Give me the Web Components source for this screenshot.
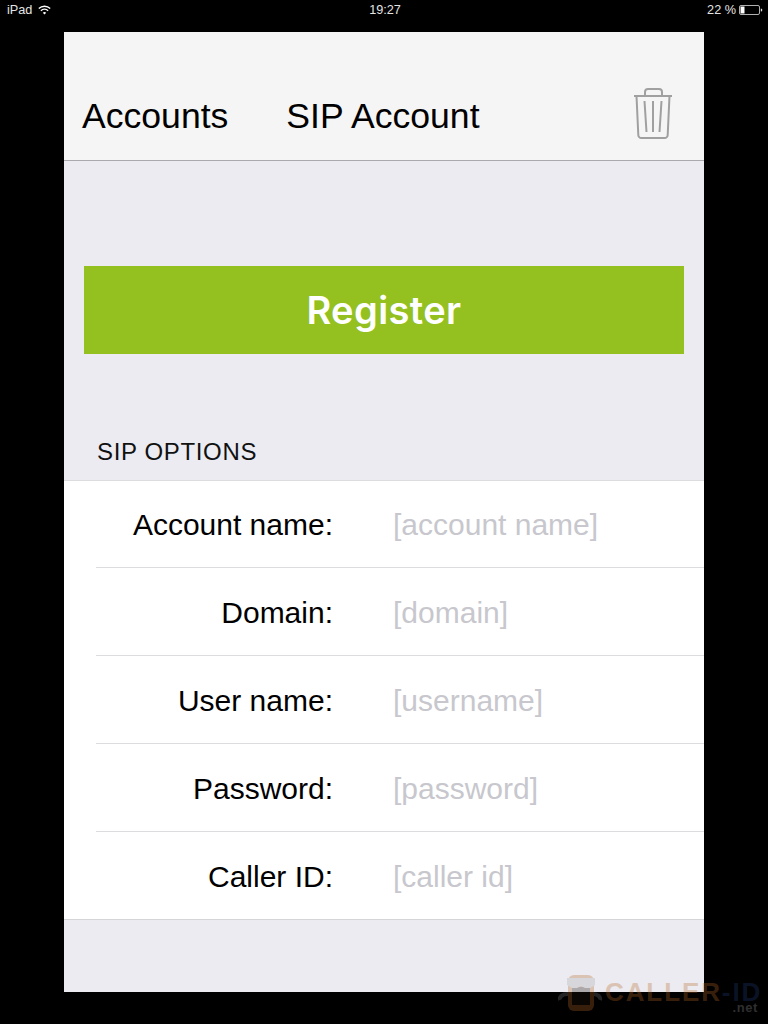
<!DOCTYPE html>
<html>
<head>
<meta charset="utf-8">
<title>SIP Account</title>
<style>
  html, body { margin: 0; height: 100%; background: #000; }
  body { font-family: "Liberation Sans", Arial, sans-serif; overflow: hidden; }
</style>
</head>
<body>
<ipad-screen>
  <status-bar slot="status"></status-bar>
  <nav-bar slot="nav" back="Accounts" heading="SIP Account"></nav-bar>
  <register-button>Register</register-button>
  <form-section heading="SIP OPTIONS">
    <form-row label="Account name:" placeholder="[account name]"></form-row>
    <form-row label="Domain:" placeholder="[domain]"></form-row>
    <form-row label="User name:" placeholder="[username]"></form-row>
    <form-row label="Password:" placeholder="[password]"></form-row>
    <form-row label="Caller ID:" placeholder="[caller id]"></form-row>
  </form-section>
</ipad-screen>
<caller-mark></caller-mark>

<script>
class IpadScreen extends HTMLElement {
  connectedCallback() {
    if (this.shadowRoot) return;
    this.attachShadow({ mode: 'open' });
    this.shadowRoot.innerHTML = `
      <style>
        :host { display: block; width: 768px; height: 1024px; }
        .app {
          width: 640px;
          height: 960px;
          margin: 0 auto;
          background: #ebebf1;
          display: flex;
          flex-direction: column;
        }
        .body { padding-top: 105px; }
      </style>
      <slot name="status"></slot>
      <div class="app">
        <slot name="nav"></slot>
        <div class="body"><slot></slot></div>
      </div>
    `;
  }
}

class StatusBar extends HTMLElement {
  connectedCallback() {
    if (this.shadowRoot) return;
    this.attachShadow({ mode: 'open' });
    this.shadowRoot.innerHTML = `
      <style>
        :host { display: block; height: 32px; color: #e4e4e4; font-size: 12.7px; }
        .bar {
          height: 20px;
          padding: 0 5px 0 7px;
          display: grid;
          grid-template-columns: 1fr auto 1fr;
          align-items: center;
        }
        .left { display: flex; align-items: center; gap: 6px; }
        .right { display: flex; align-items: center; justify-content: flex-end; gap: 3px; }
        svg { display: block; }
      </style>
      <div class="bar">
        <div class="left">
          <span>iPad</span>
          <svg width="13" height="10" viewBox="0 0 13 10" fill="none" stroke="#fff" stroke-width="1.4">
            <path d="M.8 3.6a8.2 8.2 0 0 1 11.4 0"/>
            <path d="M2.900 5.700a5.200 5.200 0 0 1 7.200 0"/>
            <path d="M6.500 9.600 4.800 7.700a2.500 2.500 0 0 1 3.400 0z" fill="#fff" stroke="none"/>
          </svg>
        </div>
        <span>19:27</span>
        <div class="right">
          <span>22 %</span>
          <svg width="24" height="10" viewBox="0 0 24 10">
            <rect x=".5" y=".5" width="20" height="9" rx="1.5" fill="none" stroke="#ddd" stroke-width=".8"/>
            <rect x="1.500" y="1.500" width="4" height="7" fill="#fff"/>
            <path d="M21.800 3.400c1 .2 1.500.8 1.500 1.600s-.5 1.400-1.500 1.600z" fill="#ddd"/>
          </svg>
        </div>
      </div>
    `;
  }
}

class NavBar extends HTMLElement {
  connectedCallback() {
    if (this.shadowRoot) return;
    this.attachShadow({ mode: 'open' });
    this.shadowRoot.innerHTML = `
      <style>
        :host {
          display: block;
          box-sizing: border-box;
          height: 129px;
          background: #f5f5f5;
          border-bottom: 1px solid #a9a9ae;
          color: #000;
          font-size: 35.6px;
        }
        .bar {
          height: 128px;
          padding: 40px 31px 0 18px;
          box-sizing: border-box;
          display: flex;
          align-items: center;
        }
        .title { margin-left: 58px; flex: 1; }
        svg { display: block; margin-top: -4px; }
      </style>
      <div class="bar">
        <span class="back">${this.getAttribute('back')}</span>
        <span class="title">${this.getAttribute('heading')}</span>
        <svg width="40" height="52" viewBox="0 0 40 52" fill="none" stroke="#a0a0a0" stroke-width="2">
          <path d="M1 8h38"/>
          <path d="M12 8V4a3 3 0 0 1 3-3h11a3 3 0 0 1 3 3v4"/>
          <path d="M3.500 8l1.800 39a3 3 0 0 0 3 3h23.400a3 3 0 0 0 3-3L36.500 8"/>
          <path d="M11.500 13l2 31M20 13v31M28.500 13l-2 31"/>
        </svg>
      </div>
    `;
  }
}

class RegisterButton extends HTMLElement {
  connectedCallback() {
    if (this.shadowRoot) return;
    this.attachShadow({ mode: 'open' });
    this.shadowRoot.innerHTML = `
      <style>
        :host {
          display: flex;
          align-items: center;
          justify-content: center;
          height: 88px;
          margin: 0 20px;
          background: #94c11f;
          color: #fff;
          font-family: Inter, "Liberation Sans", sans-serif;
          font-size: 38px;
          font-weight: 600;
          letter-spacing: .4px;
        }
      </style>
      <slot></slot>
    `;
  }
}

class FormSection extends HTMLElement {
  connectedCallback() {
    if (this.shadowRoot) return;
    this.attachShadow({ mode: 'open' });
    this.shadowRoot.innerHTML = `
      <style>
        :host { display: block; margin-top: 81px; }
        h2 {
          margin: 0;
          padding-left: 33px;
          height: 45px;
          font-size: 24px;
          font-weight: normal;
          line-height: 33px;
          letter-spacing: .65px;
          color: #111;
        }
        .rows {
          background: #fff;
          border-top: 1px solid #dcdcdf;
          border-bottom: 1px solid #d5d5d8;
        }
      </style>
      <h2>${this.getAttribute('heading')}</h2>
      <div class="rows"><slot></slot></div>
    `;
  }
}

class FormRow extends HTMLElement {
  connectedCallback() {
    if (this.shadowRoot) return;
    this.attachShadow({ mode: 'open' });
    this.shadowRoot.innerHTML = `
      <style>
        :host { display: block; margin-left: 32px; }
        .row {
          box-sizing: border-box;
          height: 88px;
          padding-top: 2px;
          display: grid;
          grid-template-columns: 237px 1fr;
          column-gap: 60px;
          align-items: center;
          border-bottom: 1px solid #dcdcdf;
          font-size: 30px;
        }
        :host(:first-child) .row { height: 87px; }
        :host(:last-child) .row { height: 87px; border-bottom: 0; }
        .label { text-align: right; color: #000; }
        .value { color: #c7c7cd; }
      </style>
      <div class="row">
        <span class="label">${this.getAttribute('label')}</span>
        <span class="value">${this.getAttribute('placeholder')}</span>
      </div>
    `;
  }
}

// faded watermark in the bottom corner, sits over the page
class CallerMark extends HTMLElement {
  connectedCallback() {
    if (this.shadowRoot) return;
    this.attachShadow({ mode: 'open' });
    this.shadowRoot.innerHTML = `
      <style>
        :host {
          position: absolute;
          left: 558px;
          top: 974px;
          width: 204px;
          height: 40px;
          font-weight: bold;
          opacity: .3;
        }
        .text {
          position: absolute;
          left: 47px;
          top: 8px;
          display: flex;
          font-size: 26px;
          line-height: 20px;
          letter-spacing: 1.9px;
          white-space: nowrap;
          color: #b8692a;
        }
        .text b { display: block; color: #24407e; }
        .net {
          position: absolute;
          right: 4px;
          top: 29px;
          font-size: 13px;
          line-height: 10px;
          letter-spacing: .6px;
          color: #999;
        }
        svg { position: absolute; left: 0; top: 0; }
      </style>
      <svg width="46" height="38" viewBox="0 0 46 38">
        <path d="M10 20c-6 0-9 3-8 6M34 20c6 0 9 3 8 6" stroke="#777" stroke-width="4" fill="none"/>
        <rect x="10" y="1" width="26" height="36" rx="6" fill="#b8692a"/>
        <rect x="14" y="13" width="18" height="18" fill="#20140c"/>
        <path d="M9 4h28v7l-5 3h-5l-4-2-4 2h-5l-5-3z" fill="#aaa"/>
      </svg>
      <span class="text"><span>CALLER</span><b>-ID</b></span>
      <span class="net">.net</span>
    `;
  }
}

customElements.define('ipad-screen', IpadScreen);
customElements.define('status-bar', StatusBar);
customElements.define('nav-bar', NavBar);
customElements.define('register-button', RegisterButton);
customElements.define('form-section', FormSection);
customElements.define('form-row', FormRow);
customElements.define('caller-mark', CallerMark);
</script>
</body>
</html>
